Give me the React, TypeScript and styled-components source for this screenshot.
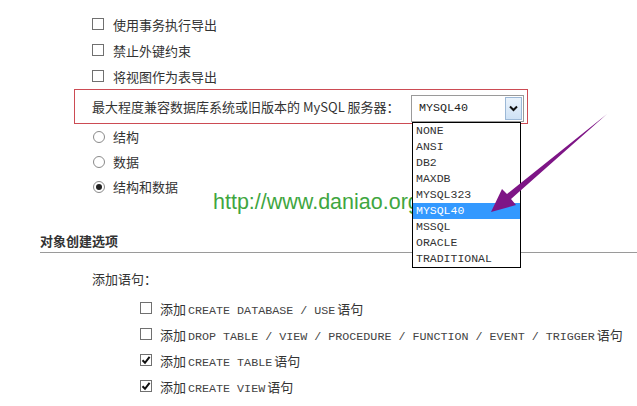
import React from 'react';
import styled, { createGlobalStyle } from 'styled-components';

const GlobalStyle = createGlobalStyle`
  body {
    margin: 0;
    background: #fff;
    font-family: "Noto Sans CJK SC", "Noto Sans", sans-serif;
    color: #333;
  }
`;

const Page = styled.div`
  position: relative;
  width: 637px;
  height: 406px;
  overflow: hidden;
  padding-top: 11px;
  box-sizing: border-box;
  font-size: 13px;
`;

const OptionGroup = styled.div<{ $indent: number }>`
  display: flex;
  flex-direction: column;
  padding-left: ${(p) => p.$indent}px;
`;

const OptionRow = styled.label<{ $h: number; $gap: number }>`
  display: flex;
  align-items: center;
  gap: ${(p) => p.$gap}px;
  height: ${(p) => p.$h}px;
  white-space: nowrap;
`;

const Box = styled.span`
  width: 12px;
  height: 12px;
  box-sizing: border-box;
  border: 1px solid #707070;
  background: #fff;
  display: flex;
  align-items: center;
  justify-content: center;
  flex: none;
`;

const Round = styled.span`
  width: 12px;
  height: 12px;
  box-sizing: border-box;
  border: 1px solid #8a8a8a;
  border-radius: 50%;
  background: #fff;
  display: flex;
  align-items: center;
  justify-content: center;
  flex: none;
`;

const Dot = styled.span`
  width: 6px;
  height: 6px;
  border-radius: 50%;
  background: #222;
`;

const Code = styled.span`
  font-family: "Liberation Mono", "DejaVu Sans Mono", monospace;
  font-size: 11.7px;
  color: #444;
  margin: 0 2px;
`;

const CompatRow = styled.div`
  margin-left: 74px;
  width: 454px;
  height: 35px;
  box-sizing: border-box;
  border: 1px solid #cc4b54;
  display: flex;
  align-items: center;
  justify-content: space-between;
  padding: 0 3px 0 17px;
`;

const SelectWrap = styled.div`
  position: relative;
  width: 113px;
  height: 27px;
  margin-top: 3px;
`;

const SelectBox = styled.div`
  height: 100%;
  box-sizing: border-box;
  border: 1px solid #9a9a9a;
  display: flex;
  align-items: center;
  justify-content: space-between;
  padding: 1px 1px 1px 7px;
  font-family: "Liberation Mono", "DejaVu Sans Mono", monospace;
  font-size: 11.7px;
  color: #222;
`;

const SelectButton = styled.span`
  width: 17px;
  height: 100%;
  box-sizing: border-box;
  border: 1px solid #9cb8d6;
  background: linear-gradient(#eaf3fc, #cfe2f5);
  display: flex;
  align-items: center;
  justify-content: center;
`;

const DropList = styled.ul`
  position: absolute;
  top: 100%;
  left: 1px;
  width: 109px;
  margin: 0;
  padding: 0;
  list-style: none;
  background: #fff;
  border: 1px solid #000;
  box-sizing: border-box;
  z-index: 2;
`;

const DropItem = styled.li<{ $active?: boolean }>`
  height: 16px;
  line-height: 16px;
  padding-left: 3px;
  font-family: "Liberation Mono", "DejaVu Sans Mono", monospace;
  font-size: 11.5px;
  color: ${(p) => (p.$active ? '#fff' : '#333')};
  background: ${(p) => (p.$active ? '#3399ff' : 'transparent')};
`;

const SectionTitle = styled.div`
  margin: 33px 0 0 40px;
  height: 20px;
  border-bottom: 1px solid #9a9a9a;
  font-weight: bold;
  font-size: 13px;
  line-height: 18px;
  color: #333;
`;

const StatementLabel = styled.div`
  margin: 16px 0 6px 92px;
  height: 20px;
  line-height: 20px;
`;

const Watermark = styled.div`
  position: absolute;
  left: 213px;
  top: 190px;
  font-family: "Liberation Sans", Arial, sans-serif;
  font-size: 21.5px;
  line-height: 24px;
  color: #3fa63f;
  z-index: 1;
`;

const ArrowLayer = styled.svg`
  position: absolute;
  left: 0;
  top: 0;
  pointer-events: none;
  z-index: 3;
`;

const Check = ({ on }: { on?: boolean }) => (
  <Box>
    {on && (
      <svg width="10" height="10" viewBox="0 0 10 10">
        <path d="M1.5 5.2 L4 7.8 L8.6 1.8" fill="none" stroke="#111" strokeWidth="2" />
      </svg>
    )}
  </Box>
);

const Radio = ({ on }: { on?: boolean }) => <Round>{on && <Dot />}</Round>;

const dialects = ['NONE', 'ANSI', 'DB2', 'MAXDB', 'MYSQL323', 'MYSQL40', 'MSSQL', 'ORACLE', 'TRADITIONAL'];

function App() {
  return (
    <Page>
      <GlobalStyle />
      <OptionGroup $indent={92}>
        {['使用事务执行导出', '禁止外键约束', '将视图作为表导出'].map((t) => (
          <OptionRow key={t} $h={26} $gap={9}>
            <Check />
            {t}
          </OptionRow>
        ))}
      </OptionGroup>

      <CompatRow>
        <span>最大程度兼容数据库系统或旧版本的 MySQL 服务器：</span>
        <SelectWrap>
          <SelectBox>
            MYSQL40
            <SelectButton>
              <svg width="9" height="7" viewBox="0 0 9 7">
                <path d="M1 1.5 L4.5 5 L8 1.5" fill="none" stroke="#111" strokeWidth="2" />
              </svg>
            </SelectButton>
          </SelectBox>
          <DropList>
            {dialects.map((d) => (
              <DropItem key={d} $active={d === 'MYSQL40'}>
                {d}
              </DropItem>
            ))}
          </DropList>
        </SelectWrap>
      </CompatRow>

      <OptionGroup $indent={93}>
        <OptionRow $h={25} $gap={8}>
          <Radio />
          结构
        </OptionRow>
        <OptionRow $h={25} $gap={8}>
          <Radio />
          数据
        </OptionRow>
        <OptionRow $h={25} $gap={8}>
          <Radio on />
          结构和数据
        </OptionRow>
      </OptionGroup>

      <SectionTitle>对象创建选项</SectionTitle>
      <StatementLabel>添加语句：</StatementLabel>

      <OptionGroup $indent={140}>
        <OptionRow $h={26} $gap={8}>
          <Check />
          <span>
            添加<Code>CREATE DATABASE / USE</Code>语句
          </span>
        </OptionRow>
        <OptionRow $h={26} $gap={8}>
          <Check />
          <span>
            添加<Code>DROP TABLE / VIEW / PROCEDURE / FUNCTION / EVENT / TRIGGER</Code>语句
          </span>
        </OptionRow>
        <OptionRow $h={26} $gap={8}>
          <Check on />
          <span>
            添加<Code>CREATE TABLE</Code>语句
          </span>
        </OptionRow>
        <OptionRow $h={26} $gap={8}>
          <Check on />
          <span>
            添加<Code>CREATE VIEW</Code>语句
          </span>
        </OptionRow>
      </OptionGroup>

      <Watermark>http://www.daniao.org</Watermark>

      <ArrowLayer width="637" height="406" viewBox="0 0 637 406">
        <polygon
          points="491,212 502,189 507,194 607,114 511,199 516,205"
          fill="#7e1586"
        />
      </ArrowLayer>
    </Page>
  );
}

export default App;
